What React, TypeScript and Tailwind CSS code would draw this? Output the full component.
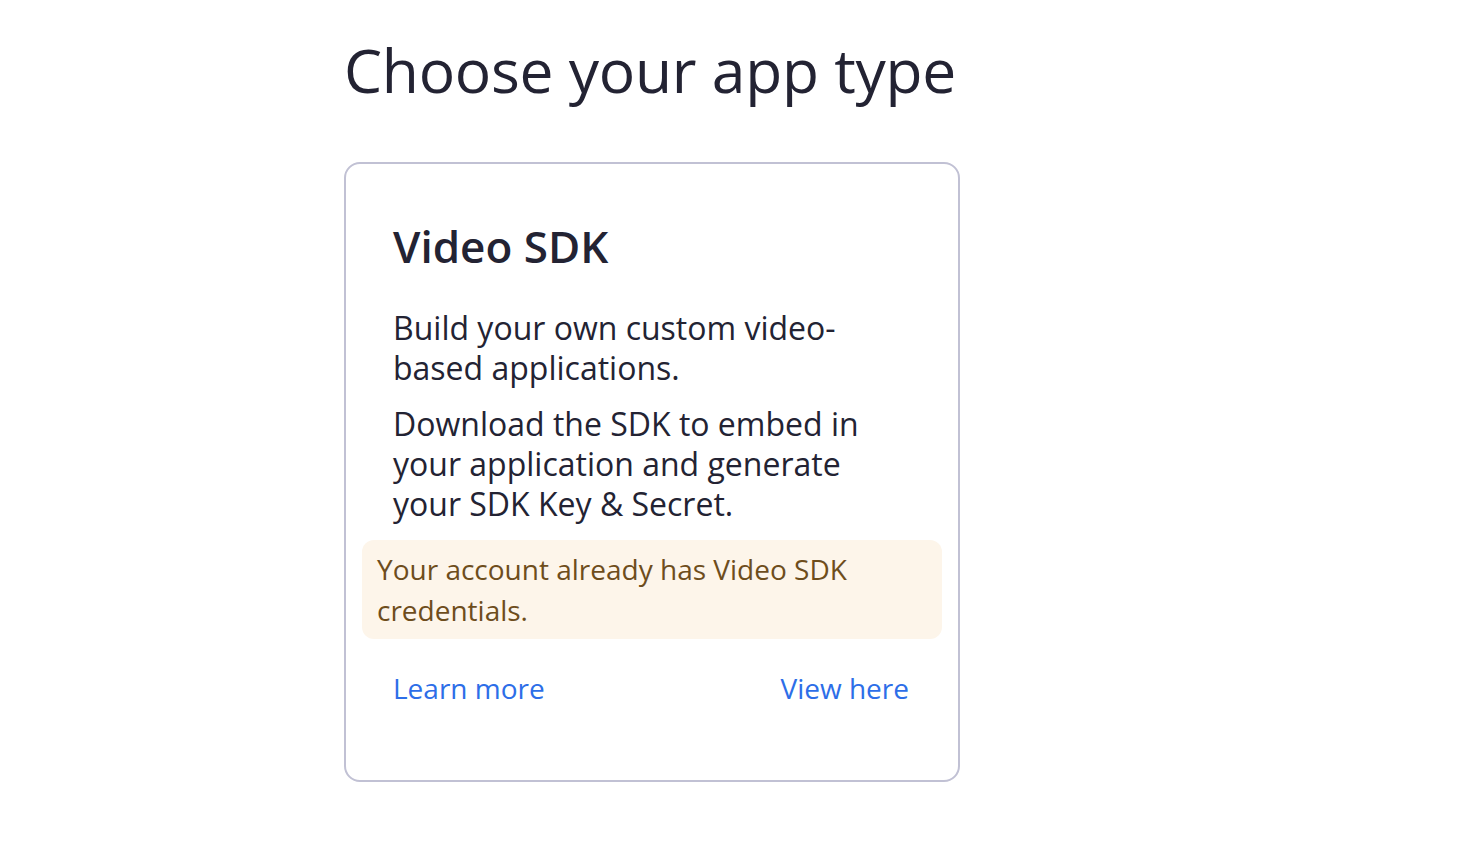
export default function App() {
  return (
    <div className="min-h-screen bg-white font-['Open_Sans',sans-serif] text-[#232333]">
      <div className="pl-[344px] pt-[30px]">
        <h1 className="text-[60.5px] leading-[80px] font-normal tracking-[-0.25px]">Choose your app type</h1>

        <div className="mt-[52px] w-[616px] h-[620px] rounded-[16px] border-2 border-[#c1c1d4] px-[16px] pt-[54px]">
          <div className="pl-[31px] pr-[40px]">
            <h2 className="text-[44px] leading-[56px] font-semibold">Video SDK</h2>
            <div className="max-w-[480px]">
              <p className="mt-[34px] text-[32px] leading-[40px]">Build your own custom video-based applications.</p>
              <p className="mt-[16px] text-[32px] leading-[40px]">
                Download the SDK to embed in your application and generate your SDK Key &amp; Secret.
              </p>
            </div>
          </div>

          <div className="mt-[16px] rounded-[12px] bg-[#fdf5ea] pl-[15px] pr-[15px] pt-[9px] pb-[8px] text-[28px] leading-[41px] text-[#6e4d1c]">
            Your account already has Video SDK credentials.
          </div>

          <div className="mt-[29px] flex items-center justify-between pl-[31px] pr-[33px] text-[28px] leading-[40px] text-[#2d6ee8]">
            <a href="#">Learn more</a>
            <a href="#">View here</a>
          </div>
        </div>
      </div>
    </div>
  )
}
